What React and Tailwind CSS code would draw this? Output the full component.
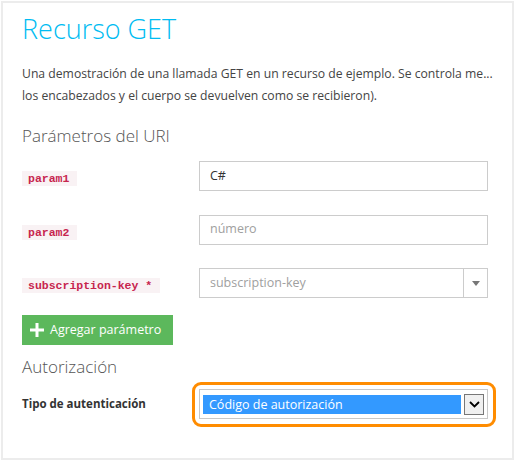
import React from 'react';

const font = { fontFamily: '"Open Sans", "Noto Sans", sans-serif' };

function ParamChip({ children }) {
  return (
    <span className="inline-block bg-[#f9f2f4] text-[#c7254e] pl-[6px] pr-[8px] h-[15px] leading-[15px] text-[11.5px] font-['Liberation_Mono',monospace] font-bold whitespace-pre">
      {children}
    </span>
  );
}

function TextInput({ value, placeholder }) {
  return (
    <div className="w-[289px] h-[30px] border border-[#cccccc] flex items-center px-[10px] text-[12.5px]">
      {value ? (
        <span className="text-[#333]">{value}</span>
      ) : (
        <span className="text-[#a0a0a0]">{placeholder}</span>
      )}
    </div>
  );
}

function ComboInput({ placeholder }) {
  return (
    <div className="w-[289px] h-[30px] border border-[#cccccc] flex text-[12.5px]">
      <div className="flex-1 flex items-center px-[10px] text-[#a0a0a0]">{placeholder}</div>
      <div className="w-[24px] border-l border-[#cccccc] flex items-center justify-center">
        <svg width="8" height="5" viewBox="0 0 8 5">
          <path d="M0 0 L8 0 L4 5 Z" fill="#777" />
        </svg>
      </div>
    </div>
  );
}

export default function App() {
  const rows = [
    { label: 'param1', input: <TextInput value="C#" /> },
    { label: 'param2', input: <TextInput placeholder="número" /> },
    { label: 'subscription-key *', input: <ComboInput placeholder="subscription-key" /> },
  ];

  return (
    <div className="bg-white p-px" style={font}>
      <div className="w-[513px] h-[459px] border-2 border-[#ececec] pl-[19px] pt-[8px]">
        <h1 className="text-[27px] leading-[36px] font-light text-[#00bcf2]">Recurso GET</h1>

        <p className="mt-[16px] text-[12.2px] leading-[22px] text-[#444] whitespace-nowrap">
          Una demostración de una llamada GET en un recurso de ejemplo. Se controla me...
          <br />
          los encabezados y el cuerpo se devuelven como se recibieron).
        </p>

        <h2 className="mt-[17px] text-[17px] leading-[24px] font-light text-[#555]">Parámetros del URI</h2>

        <div className="mt-[13px] flex flex-col gap-[23.5px]">
          {rows.map(row => (
            <div key={row.label} className="flex items-center">
              <div className="w-[177px]">
                <ParamChip>{row.label}</ParamChip>
              </div>
              {row.input}
            </div>
          ))}
        </div>

        <button className="mt-[17px] w-[151px] h-[30px] bg-[#5cb85c] text-white flex items-center pl-[8px] text-[12.5px]">
          <svg width="14" height="14" viewBox="0 0 14 14" className="mr-[6px]">
            <rect x="5.5" y="0" width="3" height="14" fill="#fff" />
            <rect x="0" y="5.5" width="14" height="3" fill="#fff" />
          </svg>
          Agregar parámetro
        </button>

        <h2 className="mt-[10px] text-[17px] leading-[24px] font-light text-[#555]">Autorización</h2>

        <div className="mt-[10px] flex items-center">
          <div className="w-[177px] text-[11.5px] font-bold text-[#333]">Tipo de autenticación</div>
          <div className="relative w-[289px] h-[30px] border border-[#c8c8c8] flex items-center pl-[3px] pr-[3px] gap-[3px]">
            <span className="absolute -left-[8px] -top-[8px] -right-[9px] -bottom-[9px] border-[3px] border-[#ff8c00] rounded-[9px]" />
            <div className="flex-1 h-[19px] bg-[#3399ff] text-white text-[12.5px] leading-[19px] pl-[6px]">
              Código de autorización
            </div>
            <div className="w-[20px] h-[21px] bg-[#f0f0f0] border border-[#777] flex items-center justify-center">
              <svg width="11" height="7" viewBox="0 0 11 7">
                <path d="M1 1 L5.5 5.5 L10 1" stroke="#000" strokeWidth="1.8" fill="none" />
              </svg>
            </div>
          </div>
        </div>
      </div>
    </div>
  );
}
